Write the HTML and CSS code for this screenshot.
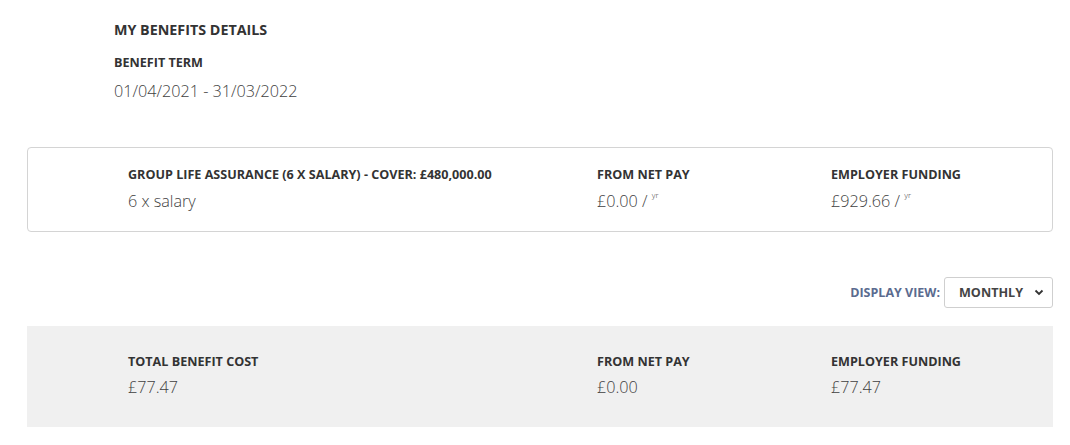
FILE: index.html
```html
<!DOCTYPE html>
<html lang="en">

<head>
    <meta charset="UTF-8">
    <meta name="viewport" content="width=device-width, initial-scale=1.0">
    <title>My Benefits Details</title>
    <link rel="stylesheet" href="styles.css">
</head>

<body>
    <div class="page">
        <div class="summary">
            <h1 class="page-title">MY BENEFITS DETAILS</h1>
            <h2 class="label">BENEFIT TERM</h2>
            <p class="value">01/04/2021 - 31/03/2022</p>
        </div>

        <div class="benefit-card">
            <div class="cell">
                <h3 class="label">GROUP LIFE ASSURANCE (6 X SALARY) - COVER: £480,000.00</h3>
                <p class="value">6 x salary</p>
            </div>
            <div class="cell">
                <h3 class="label">FROM NET PAY</h3>
                <p class="value">£0.00 / <sup>yr</sup></p>
            </div>
            <div class="cell">
                <h3 class="label">EMPLOYER FUNDING</h3>
                <p class="value">£929.66 / <sup>yr</sup></p>
            </div>
        </div>

        <div class="view-bar">
            <label for="display-view">DISPLAY VIEW:</label>
            <div class="select-wrap">
                <select id="display-view">
                    <option>MONTHLY</option>
                    <option>ANNUAL</option>
                </select>
                <svg class="chevron" width="10" height="7" viewBox="0 0 10 7">
                    <path d="M1.5 1.5 L5 5 L8.5 1.5" fill="none" stroke="#333" stroke-width="1.8" />
                </svg>
            </div>
        </div>

        <div class="total-panel">
            <div class="cell">
                <h3 class="label">TOTAL BENEFIT COST</h3>
                <p class="value">£77.47</p>
            </div>
            <div class="cell">
                <h3 class="label">FROM NET PAY</h3>
                <p class="value">£0.00</p>
            </div>
            <div class="cell">
                <h3 class="label">EMPLOYER FUNDING</h3>
                <p class="value">£77.47</p>
            </div>
        </div>
    </div>
</body>

</html>
```

FILE: styles.css
```css
:root {
    --heading-color: #333333;
    --value-color: #3f3f3f;
    --accent-color: #5b6b8f;
    /* Muted blue for labels */
    --border-color: #d4d4d4;
    --panel-bg: #f0f0f0;
}

* {
    box-sizing: border-box;
    margin: 0;
    padding: 0;
}

body {
    font-family: "Open Sans", "Liberation Sans", sans-serif;
    background-color: #fff;
    color: var(--heading-color);
}

.page {
    width: 1026px;
    margin-left: 27px;
    padding-top: 21px;
}

.summary {
    padding-left: 87px;
    height: 126px;
}

.page-title {
    font-size: 14.3px;
    font-weight: 700;
    line-height: 18px;
    margin-bottom: 16px;
}

.label {
    font-size: 12.6px;
    font-weight: 700;
    line-height: 16px;
    color: var(--heading-color);
}

.value {
    font-size: 16.2px;
    font-weight: 300;
    line-height: 22px;
    color: var(--value-color);
    margin-top: 7px;
}

.value sup {
    font-size: 8px;
    line-height: 0;
    vertical-align: 9px;
}

.summary .value {
    margin-top: 9px;
}

/* Benefit row card */
.benefit-card,
.total-panel {
    display: grid;
    grid-template-columns: 469px 234px 1fr;
    padding-left: 100px;
}

.benefit-card {
    border: 1px solid var(--border-color);
    border-radius: 4px;
    height: 85px;
    padding-top: 19px;
}

.view-bar {
    display: flex;
    justify-content: flex-end;
    align-items: center;
    gap: 4px;
    margin-top: 45px;
    height: 31px;
}

.view-bar label {
    font-size: 12.5px;
    font-weight: 700;
    color: var(--accent-color);
}

.select-wrap {
    position: relative;
    width: 109px;
    height: 31px;
}

.select-wrap select {
    appearance: none;
    width: 100%;
    height: 100%;
    border: 1px solid #cfcfcf;
    border-radius: 3px;
    background-color: #fff;
    font-family: inherit;
    font-size: 12.6px;
    font-weight: 700;
    color: #444;
    padding-left: 14px;
    outline: none;
}

.chevron {
    position: absolute;
    right: 9px;
    top: 12px;
    pointer-events: none;
}

.total-panel {
    background-color: var(--panel-bg);
    margin-top: 18px;
    height: 101px;
    padding-top: 28px;
    padding-left: 101px;
}

.total-panel .value {
    margin-top: 6px;
}
```
